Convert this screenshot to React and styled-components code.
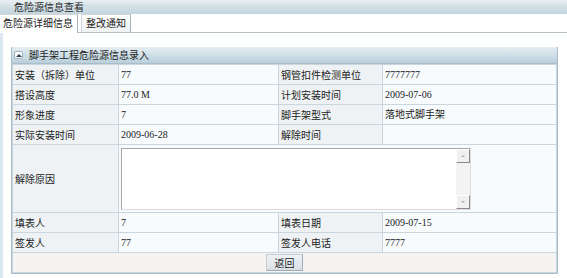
import React from "react";
import styled, { createGlobalStyle } from "styled-components";

const Global = createGlobalStyle`
  html, body { margin: 0; padding: 0; background: #fff; }
  body {
    font-family: "Noto Sans CJK SC", "Liberation Sans", sans-serif;
    font-size: 10px;
    color: #222;
  }
`;

const Page = styled.div`
  width: 567px;
  height: 278px;
  display: flex;
  flex-direction: column;
  overflow: hidden;
`;

const TitleBar = styled.div`
  height: 14px;
  line-height: 14px;
  padding-left: 14px;
  font-size: 10px;
  color: #2a2a2a;
  background: linear-gradient(#e9f0f3 0%, #d3e0e6 45%, #c4d5dd 100%);
`;

const TabBar = styled.div`
  height: 18px;
  display: flex;
  gap: 3px;
  border-bottom: 1px solid #b9c2c8;
  background: #fff;
`;

const Tab = styled.div`
  box-sizing: border-box;
  height: ${(p) => (p.$active ? "19px" : "18px")};
  margin-bottom: ${(p) => (p.$active ? "-1px" : "0")};
  line-height: 16px;
  padding: ${(p) => (p.$active ? "0 4px 0 3px" : "0 4px")};
  font-size: 10px;
  color: #222;
  border-right: 1px solid #a9b3ba;
  border-left: ${(p) => (p.$active ? "none" : "1px solid #d0d6da")};
  border-top: 1px solid #d0d6da;
  background: ${(p) => (p.$active ? "#fff" : "linear-gradient(#ffffff, #eef1f2)")};
`;

const Body = styled.div`
  flex: 1;
  border-left: 3px solid #dbe8f1;
  padding: 14px 9px 0 8px;
`;

const Panel = styled.div`
  border: 1px solid #a9bcc7;
  border-top: none;
`;

const PanelHeader = styled.div`
  height: 16px;
  display: flex;
  align-items: center;
  gap: 6px;
  padding-left: 2px;
  background: linear-gradient(#e3edf2 0%, #cfdfe7 50%, #b9cfda 100%);
  border-bottom: 1px solid #a9bcc7;
  color: #1e1e1e;
  font-size: 10px;
  line-height: 16px;
`;

const Toggle = styled.span`
  width: 9px;
  height: 8px;
  box-sizing: border-box;
  background: #fdfefe;
  border: 1px solid #9fb3bf;
  border-radius: 2px;
  display: flex;
  align-items: center;
  justify-content: center;
  &::after {
    content: "";
    border-left: 3px solid transparent;
    border-right: 3px solid transparent;
    border-bottom: 3px solid #2c3e4a;
  }
`;

const Table = styled.table`
  width: 100%;
  border-collapse: collapse;
  table-layout: fixed;
`;

const Cell = styled.td`
  height: ${(p) => p.$h || 19}px;
  padding: 0 0 0 2px;
  border: 1px solid #c9d6de;
  font-size: 10px;
  line-height: 12px;
  vertical-align: middle;
  color: #222;
  background: ${(p) => (p.$label ? "#eef2f4" : "#f7fbfd")};
  font-family: ${(p) =>
    p.$label
      ? `"Noto Sans CJK SC", "Liberation Sans", sans-serif`
      : `"Liberation Serif", "Noto Sans CJK SC", serif`};
  white-space: nowrap;
  overflow: hidden;
`;

const FooterCell = styled.td`
  height: 19px;
  padding: 0;
  border: 1px solid #c9d6de;
  background: #f5f4f3;
  text-align: center;
  vertical-align: middle;
`;

const Button = styled.button`
  width: 37px;
  height: 17px;
  padding: 0;
  font-family: "Noto Sans CJK SC", sans-serif;
  font-size: 10px;
  line-height: 15px;
  color: #222;
  border: 1px solid #c3ccd2;
  border-right-color: #9eabb4;
  border-bottom-color: #9eabb4;
  background: linear-gradient(#eef2f5, #d9e0e5);
  display: block;
  margin: 0 auto;
`;

const AreaBox = styled.div`
  width: 350px;
  height: 62px;
  margin: 3px 0 2px 0;
  box-sizing: border-box;
  display: flex;
  background: #fff;
  border: 1px solid #a8a8a8;
  border-right-color: #dcdcdc;
  border-bottom-color: #dcdcdc;
`;

const AreaText = styled.div`
  flex: 1;
`;

const ScrollBar = styled.div`
  width: 14px;
  display: flex;
  flex-direction: column;
  justify-content: space-between;
  background: #f3f3f3;
`;

const ScrollBtn = styled.div`
  width: 14px;
  height: 14px;
  box-sizing: border-box;
  background: #f0f0f0;
  border: 1px solid #fff;
  border-right-color: #8a8a8a;
  border-bottom-color: #8a8a8a;
  display: flex;
  align-items: center;
  justify-content: center;
  &::after {
    content: "";
    border-left: 2px solid transparent;
    border-right: 2px solid transparent;
    ${(p) =>
      p.$down
        ? "border-top: 2px solid #b0b0b0;"
        : "border-bottom: 2px solid #b0b0b0;"}
  }
`;

const rows = [
  ["安装（拆除）单位", "77", "钢管扣件检测单位", "7777777"],
  ["搭设高度", "77.0 M", "计划安装时间", "2009-07-06"],
  ["形象进度", "7", "脚手架型式", "落地式脚手架"],
  ["实际安装时间", "2009-06-28", "解除时间", ""],
];

const rows2 = [
  ["填表人", "7", "填表日期", "2009-07-15"],
  ["签发人", "77", "签发人电话", "7777"],
];

function Row({ r }) {
  return (
    <tr>
      <Cell $label>{r[0]}</Cell>
      <Cell>{r[1]}</Cell>
      <Cell $label>{r[2]}</Cell>
      <Cell>{r[3]}</Cell>
    </tr>
  );
}

export default function App() {
  return (
    <>
      <Global />
      <Page>
        <TitleBar>危险源信息查看</TitleBar>
        <TabBar>
          <Tab $active>危险源详细信息</Tab>
          <Tab>整改通知</Tab>
        </TabBar>
        <Body>
          <Panel>
            <PanelHeader>
              <Toggle />
              脚手架工程危险源信息录入
            </PanelHeader>
            <Table>
              <colgroup>
                <col style={{ width: "106px" }} />
                <col style={{ width: "160px" }} />
                <col style={{ width: "104px" }} />
                <col />
              </colgroup>
              <tbody>
                {rows.map((r) => (
                  <Row key={r[0]} r={r} />
                ))}
                <tr>
                  <Cell $label $h={67}>解除原因</Cell>
                  <Cell colSpan={3} $h={67}>
                    <AreaBox>
                      <AreaText />
                      <ScrollBar>
                        <ScrollBtn />
                        <ScrollBtn $down />
                      </ScrollBar>
                    </AreaBox>
                  </Cell>
                </tr>
                {rows2.map((r) => (
                  <Row key={r[0]} r={r} />
                ))}
                <tr>
                  <FooterCell colSpan={4}>
                    <Button>返回</Button>
                  </FooterCell>
                </tr>
              </tbody>
            </Table>
          </Panel>
        </Body>
      </Page>
    </>
  );
}
